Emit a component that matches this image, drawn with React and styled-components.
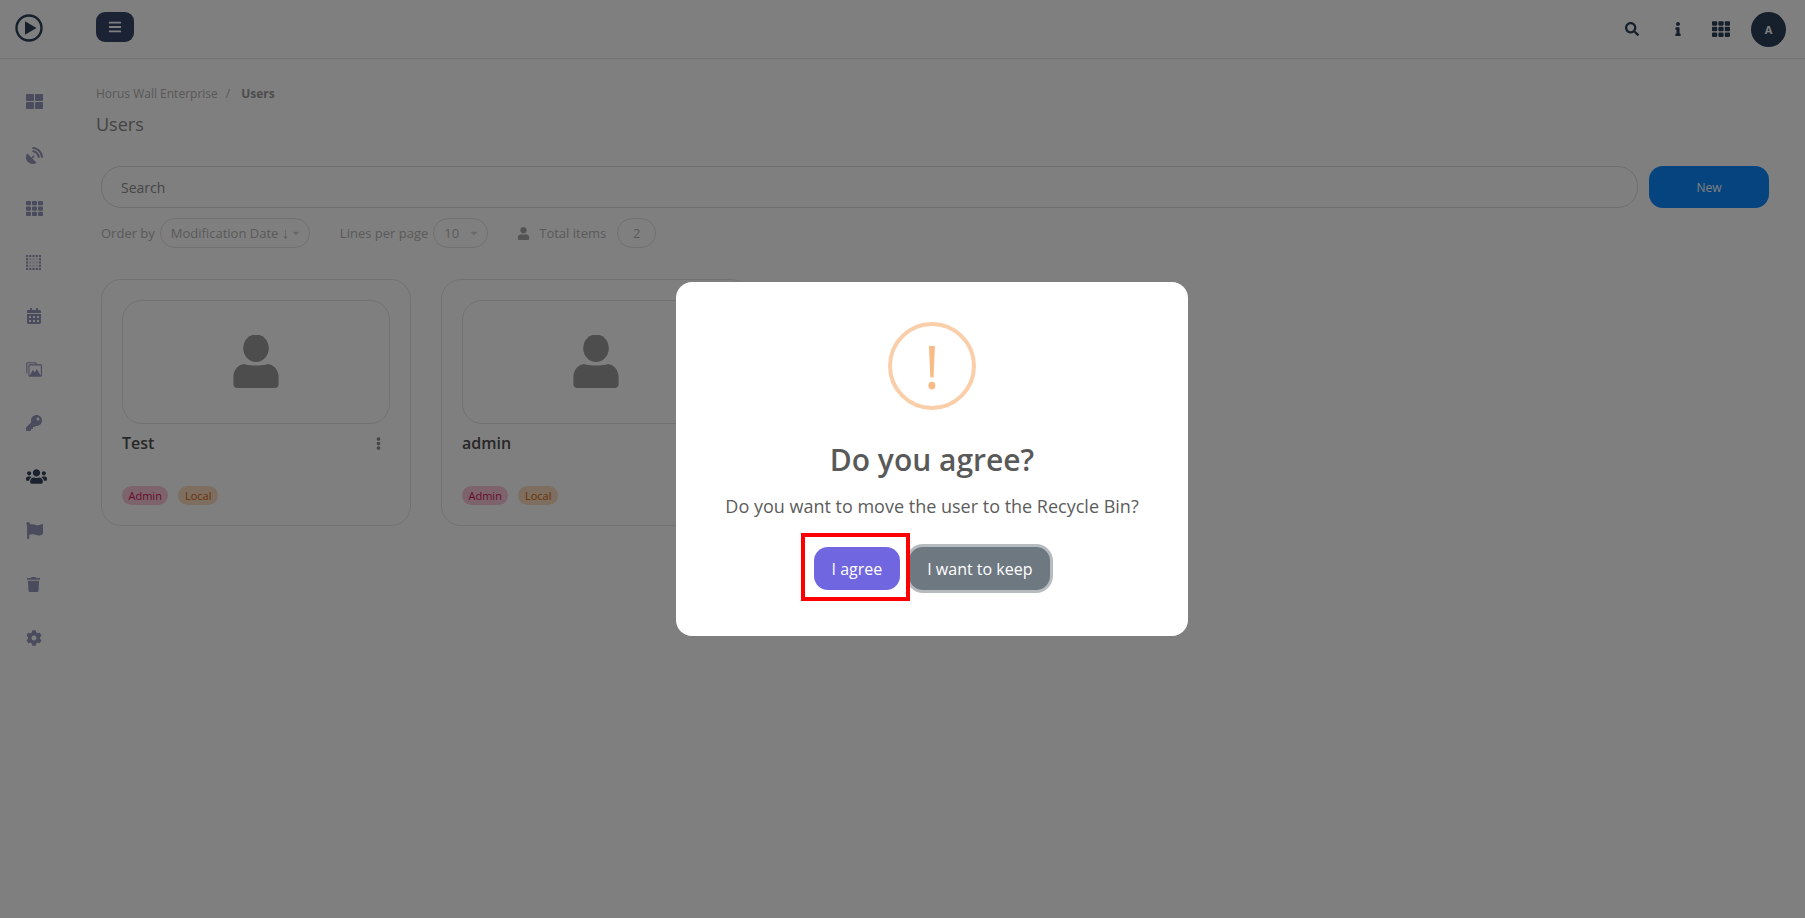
import React from "react";
import styled, { createGlobalStyle } from "styled-components";
import {
  FaBars,
  FaCalendarAlt,
  FaCaretDown,
  FaCog,
  FaEllipsisV,
  FaFlag,
  FaInfo,
  FaKey,
  FaSatelliteDish,
  FaSearch,
  FaTh,
  FaThLarge,
  FaTrash,
  FaUser,
  FaUsers,
} from "react-icons/fa";

const GlobalStyle = createGlobalStyle`
  * { box-sizing: border-box; }
  html, body { margin: 0; padding: 0; height: 100%; }
  body {
    background: #fff;
    font-family: "Open Sans", "Liberation Sans", sans-serif;
    overflow: hidden;
  }
`;

const DOT_STEPS = [0, 3, 6, 9, 12];

// outer dots are solid, the inner ones fade out
const DottedGrid = () => (
  <svg width="15" height="15" viewBox="0 0 14 14" fill="currentColor">
    {DOT_STEPS.map((y) =>
      DOT_STEPS.map((x) => {
        const outer = x === 0 || y === 0 || x === 12 || y === 12;
        return <rect key={`${x}-${y}`} x={x} y={y} width="2" height="2" opacity={outer ? 1 : 0.45} />;
      })
    )}
  </svg>
);

const Gallery = () => (
  <svg width="16" height="15" viewBox="0 0 16 15" fill="none" stroke="currentColor" strokeWidth="1.1">
    <path d="M0.8 11.5 V1.5 Q0.8 0.8 1.5 0.8 H9.5 L11 2.8" />
    <rect x="3" y="2.9" width="12.4" height="11.4" rx="0.8" />
    <path d="M3.6 14 L6.8 7.8 L8.8 10.4 L10.8 7 L15 14 Z" fill="currentColor" stroke="none" />
  </svg>
);

const Logo = () => (
  <svg width="28" height="28" viewBox="0 0 28 28">
    <circle cx="14" cy="14" r="12.5" fill="none" stroke="#2c4058" strokeWidth="2.4" />
    <path d="M10 7.2 L21.5 14 L10 20.8 Z" fill="#2c4058" />
  </svg>
);

const PersonGlyph = () => (
  <svg width="46" height="53" viewBox="0 0 46 54" fill="#9a9a9a">
    <ellipse cx="23" cy="13.5" rx="13" ry="14" />
    <path d="M11 29.5 C15 31.5 31 31.5 35 29.5 C41 30 46 36 46 42 L46 50 C46 52.5 44.5 54 42 54 L4 54 C1.5 54 0 52.5 0 50 L0 42 C0 36 5 30 11 29.5 Z" />
  </svg>
);

const navItems = [
  { icon: <FaThLarge size={17} /> },
  { icon: <FaSatelliteDish size={17} /> },
  { icon: <FaTh size={17} /> },
  { icon: <DottedGrid /> },
  { icon: <FaCalendarAlt size={16} /> },
  { icon: <Gallery /> },
  { icon: <FaKey size={16} /> },
  { icon: <FaUsers size={21} />, active: true },
  { icon: <FaFlag size={17} /> },
  { icon: <FaTrash size={15} /> },
  { icon: <FaCog size={16} /> },
];

const users = ["Test", "admin"];

export default function App() {
  return (
    <>
      <GlobalStyle />
      <Page>
        <TopBar>
          <LogoSlot>
            <Logo />
          </LogoSlot>
          <MenuButton>
            <FaBars size={14} />
          </MenuButton>
          <TopActions>
            <TopIcon $width="46px">
              <FaSearch size={14} />
            </TopIcon>
            <TopIcon $width="46px">
              <FaInfo size={14} />
            </TopIcon>
            <TopIcon $width="40px">
              <FaTh size={18} />
            </TopIcon>
            <Avatar>A</Avatar>
          </TopActions>
        </TopBar>
        <Body>
          <Sidebar>
            {navItems.map((item, i) => (
              <NavItem key={i} $active={item.active}>
                {item.icon}
              </NavItem>
            ))}
          </Sidebar>
          <Main>
            <Breadcrumb>
              Horus Wall Enterprise<Slash>/</Slash>
              <b>Users</b>
            </Breadcrumb>
            <PageTitle>Users</PageTitle>
            <Toolbar>
              <SearchBox>Search</SearchBox>
              <NewButton>New</NewButton>
            </Toolbar>
            <FilterRow>
              <FilterLabel>Order by</FilterLabel>
              <Pill $width="150px">
                <span>
                  Modification Date <SortArrow>↓</SortArrow>
                </span>
                <FaCaretDown size={10} />
              </Pill>
              <FilterLabel $left="30px">Lines per page</FilterLabel>
              <Pill $width="55px">
                10
                <FaCaretDown size={10} />
              </Pill>
              <PersonSlot>
                <FaUser size={13} />
              </PersonSlot>
              <FilterLabel>Total items</FilterLabel>
              <CountPill>2</CountPill>
            </FilterRow>
            <CardGrid>
              {users.map((name) => (
                <Card key={name}>
                  <CardPicture>
                    <PersonGlyph />
                  </CardPicture>
                  <CardHead>
                    <CardName>{name}</CardName>
                    <FaEllipsisV size={13} color="#8a8a8a" />
                  </CardHead>
                  <TagRow>
                    <Tag $bg="#f8c6d8" $color="#d01458">
                      Admin
                    </Tag>
                    <Tag $bg="#fbdcc0" $color="#d8640c">
                      Local
                    </Tag>
                  </TagRow>
                </Card>
              ))}
            </CardGrid>
          </Main>
        </Body>
        <Overlay>
          <Dialog>
            <WarnIcon>!</WarnIcon>
            <DialogTitle>Do you agree?</DialogTitle>
            <DialogText>Do you want to move the user to the Recycle Bin?</DialogText>
            <DialogActions>
              <ConfirmWrap>
                <ConfirmButton>I agree</ConfirmButton>
                <Highlight />
              </ConfirmWrap>
              <CancelButton>I want to keep</CancelButton>
            </DialogActions>
          </Dialog>
        </Overlay>
      </Page>
    </>
  );
}

const Page = styled.div`
  position: relative;
  width: 100%;
  height: 100vh;
  overflow: hidden;
  display: flex;
  flex-direction: column;
`;

const TopBar = styled.header`
  height: 59px;
  flex: none;
  display: flex;
  align-items: center;
  padding-right: 19px;
  border-bottom: 1px solid #e8e8ec;
`;

const LogoSlot = styled.div`
  width: 96px;
  margin-top: -3px;
  padding-left: 15px;
  display: flex;
  align-items: center;
`;

const MenuButton = styled.button`
  width: 38px;
  height: 30px;
  margin-top: -4px;
  padding: 0;
  border: none;
  border-radius: 9px;
  background: #344466;
  color: #fff;
  display: flex;
  align-items: center;
  justify-content: center;
`;

const TopActions = styled.div`
  margin-left: auto;
  display: flex;
  align-items: center;
`;

const TopIcon = styled.span`
  width: ${({ $width }) => $width};
  display: flex;
  justify-content: center;
  color: #2c4058;
`;

const Avatar = styled.div`
  width: 35px;
  height: 35px;
  margin-left: 10px;
  border-radius: 50%;
  background: #2c4058;
  color: #fff;
  font-size: 11px;
  font-weight: 700;
  display: flex;
  align-items: center;
  justify-content: center;
`;

const Body = styled.div`
  flex: 1;
  display: flex;
`;

const Sidebar = styled.nav`
  width: 96px;
  flex: none;
  padding-top: 16px;
  padding-left: 26px;
  display: flex;
  flex-direction: column;
`;

const NavItem = styled.div`
  height: 53.6px;
  display: flex;
  align-items: center;
  color: ${({ $active }) => ($active ? "#344460" : "#9497b8")};
`;

const Main = styled.main`
  flex: 1;
  min-width: 0;
  padding: 26px 36px 0 0;
`;

const Breadcrumb = styled.div`
  font-size: 12px;
  line-height: 18px;
  color: #b0b0b0;
  b {
    color: #9a9a9a;
    font-weight: 700;
  }
`;

const Slash = styled.span`
  margin: 0 11px 0 8px;
`;

const PageTitle = styled.h1`
  margin: 8px 0 0;
  font-size: 18px;
  line-height: 26px;
  font-weight: 400;
  color: #8a8a8a;
`;

const Toolbar = styled.div`
  margin-top: 29px;
  padding-left: 5px;
  display: flex;
  gap: 11px;
`;

const SearchBox = styled.div`
  flex: 1;
  height: 42px;
  padding-left: 19px;
  border: 1px solid #dcdcdc;
  border-radius: 20px;
  display: flex;
  align-items: center;
  font-size: 14px;
  color: #8c8c8c;
`;

const NewButton = styled.button`
  width: 120px;
  height: 42px;
  border: none;
  border-radius: 14px;
  background: #0a88ff;
  color: #fff;
  font-family: inherit;
  font-size: 12px;
  font-weight: 500;
`;

const FilterRow = styled.div`
  margin-top: 10px;
  padding-left: 5px;
  height: 30px;
  display: flex;
  align-items: center;
  font-size: 13px;
`;

const FilterLabel = styled.span`
  margin-left: ${({ $left }) => $left || "0"};
  color: #b4b4b4;
`;

const Pill = styled.div`
  width: ${({ $width }) => $width};
  height: 30px;
  margin-left: 5px;
  padding: 0 8px 0 10px;
  border: 1px solid #e0e0e0;
  border-radius: 15px;
  display: flex;
  align-items: center;
  justify-content: space-between;
  color: #b4b4b4;
  white-space: nowrap;
  svg {
    color: #d0d0d0;
  }
`;

const SortArrow = styled.span`
  font-family: "Liberation Sans", sans-serif;
  font-size: 15px;
  line-height: 1;
`;

const PersonSlot = styled.span`
  margin-left: 29px;
  margin-right: 9px;
  display: flex;
  color: #a8a8a8;
`;

const CountPill = styled.div`
  width: 39px;
  height: 30px;
  margin-left: 11px;
  border: 1px solid #e0e0e0;
  border-radius: 15px;
  display: flex;
  align-items: center;
  justify-content: center;
  color: #b4b4b4;
`;

const CardGrid = styled.div`
  margin-top: 31px;
  padding-left: 5px;
  display: flex;
  gap: 30px;
`;

const Card = styled.article`
  width: 310px;
  height: 247px;
  padding: 20px 20px 0;
  border: 1px solid #e4e4e4;
  border-radius: 20px;
`;

const CardPicture = styled.div`
  height: 124px;
  padding-bottom: 2px;
  border: 1px solid #e4e4e4;
  border-radius: 20px;
  display: flex;
  align-items: center;
  justify-content: center;
`;

const CardHead = styled.div`
  margin-top: 8px;
  padding-right: 5px;
  display: flex;
  align-items: center;
  justify-content: space-between;
`;

const CardName = styled.div`
  font-size: 16px;
  line-height: 22px;
  font-weight: 600;
  color: #505050;
`;

const TagRow = styled.div`
  margin-top: 32px;
  display: flex;
  gap: 10px;
`;

const Tag = styled.span`
  height: 19px;
  padding: 0 6.5px;
  border-radius: 10px;
  background: ${({ $bg }) => $bg};
  color: ${({ $color }) => $color};
  font-size: 11px;
  line-height: 19px;
`;

const Overlay = styled.div`
  position: absolute;
  inset: 0;
  padding-left: 59px;
  background: rgba(0, 0, 0, 0.5);
  display: flex;
  justify-content: center;
  align-items: center;
`;

const Dialog = styled.div`
  width: 512px;
  height: 354px;
  padding-top: 40px;
  background: #fff;
  border-radius: 16px;
  display: flex;
  flex-direction: column;
  align-items: center;
`;

const WarnIcon = styled.div`
  width: 88px;
  height: 88px;
  border: 4px solid #facea8;
  border-radius: 50%;
  display: flex;
  align-items: center;
  justify-content: center;
  color: #f8bb86;
  font-size: 60px;
  line-height: 1;
`;

const DialogTitle = styled.h2`
  margin: 32px 0 0;
  font-size: 30px;
  line-height: 36px;
  font-weight: 600;
  color: #595959;
`;

const DialogText = styled.p`
  margin: 14px 0 0;
  font-size: 18px;
  line-height: 28px;
  color: #5c5c5c;
`;

const DialogActions = styled.div`
  margin-top: 27px;
  display: flex;
  align-items: center;
  gap: 9px;
`;

const ConfirmWrap = styled.div`
  position: relative;
`;

const DialogButton = styled.button`
  height: 43px;
  padding: 0 18px;
  border: none;
  border-radius: 14px;
  color: #fff;
  font-family: inherit;
  font-size: 16px;
  font-weight: 500;
`;

const ConfirmButton = styled(DialogButton)`
  display: block;
  background: #7066e0;
`;

const CancelButton = styled(DialogButton)`
  background: #6e7881;
  box-shadow: 0 0 0 3px rgba(110, 120, 129, 0.5);
`;

const Highlight = styled.div`
  position: absolute;
  left: -13px;
  right: -10px;
  top: -14px;
  bottom: -11px;
  border: 4px solid #f00;
`;
